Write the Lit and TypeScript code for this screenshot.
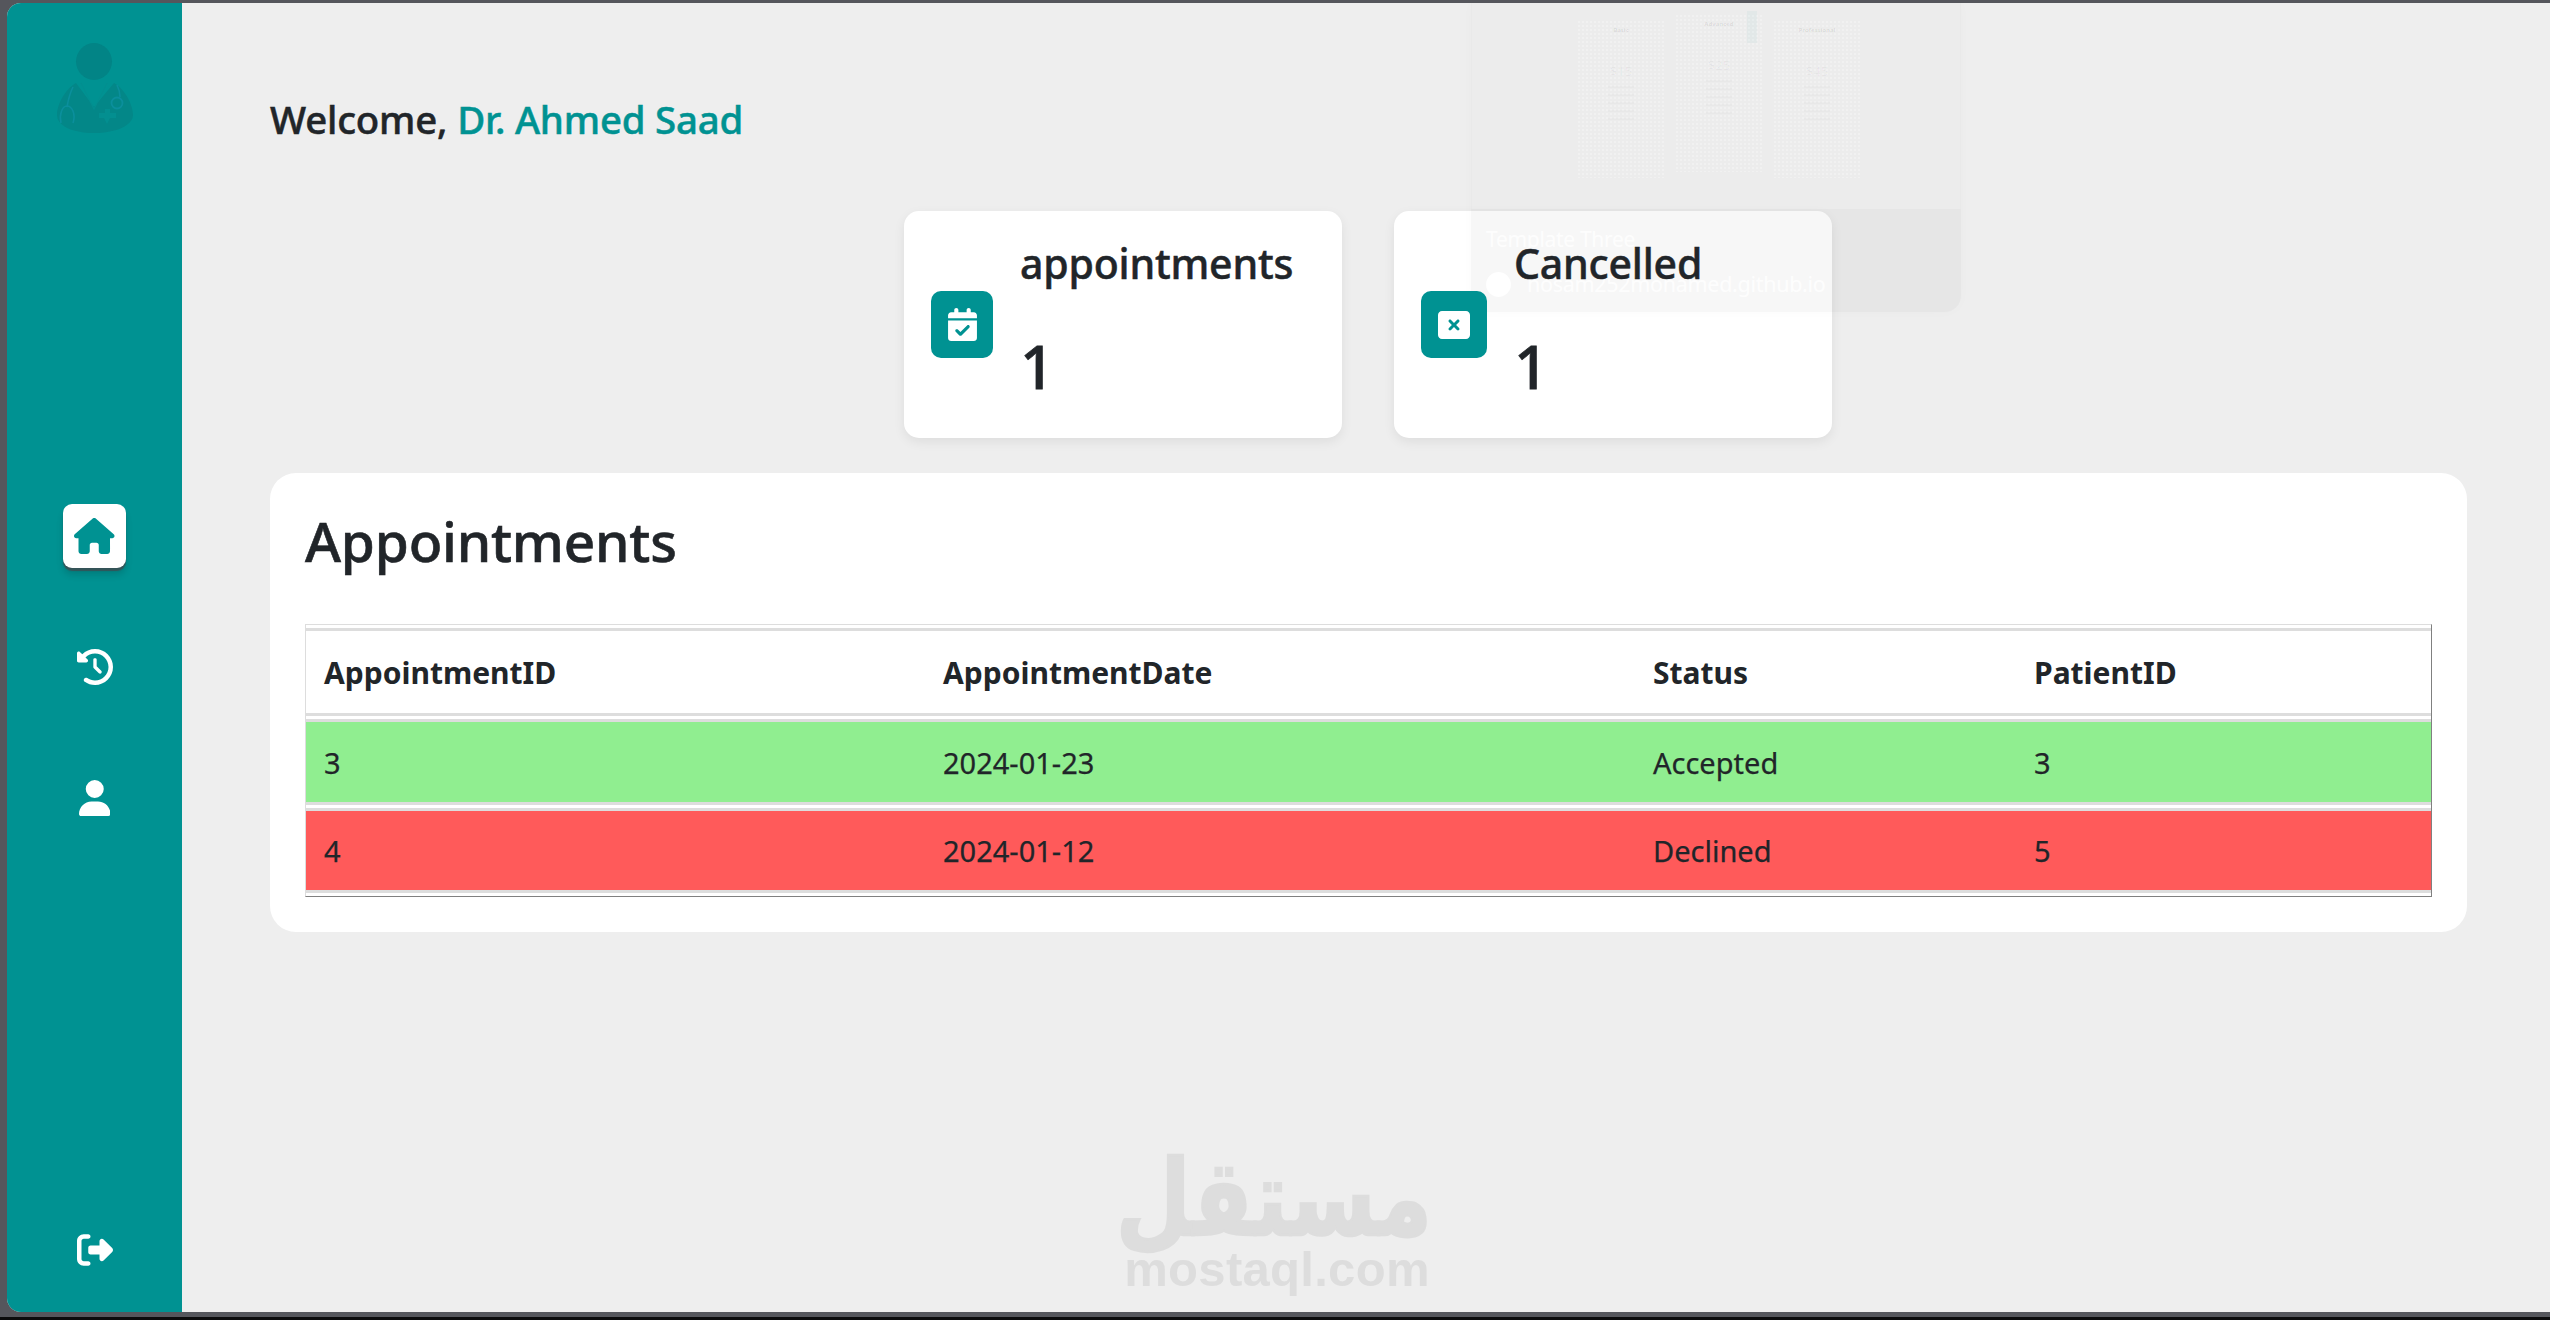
import { LitElement, html, css, svg } from "lit";
import { customElement } from "lit/decorators.js";

const ICONS = {
  house: ["0 0 576 512", "M575.8 255.5c0 18-15 32.1-32 32.1h-32l.7 160.2c0 2.7-.2 5.4-.5 8.1V472c0 22.1-17.9 40-40 40H456c-1.1 0-2.2 0-3.3-.1c-1.4 .1-2.8 .1-4.2 .1H416 392c-22.1 0-40-17.9-40-40V448 384c0-17.7-14.3-32-32-32H256c-17.7 0-32 14.3-32 32v64 24c0 22.1-17.9 40-40 40H160 128.1c-1.5 0-3-.1-4.5-.2c-1.2 .1-2.4 .2-3.6 .2H104c-22.1 0-40-17.9-40-40V360c0-.9 0-1.9 .1-2.8V287.6H32c-18 0-32-14-32-32.1c0-9 3-17 10-24L266.4 8c7-7 15-8 22-8s15 2 21 7L564.8 231.5c8 7 12 15 11 24z"],
  history: ["0 0 512 512", "M75 75L41 41C25.9 25.9 0 36.6 0 57.9V168c0 13.3 10.7 24 24 24H134.1c21.4 0 32.1-25.9 17-41l-30.8-30.8C155 85.5 203 64 256 64c106 0 192 86 192 192s-86 192-192 192c-40.8 0-78.6-12.7-109.7-34.4c-14.5-10.1-34.4-6.6-44.6 7.9s-6.6 34.4 7.9 44.6C151.2 495 201.7 512 256 512c141.4 0 256-114.6 256-256S397.4 0 256 0C185.3 0 121.3 28.7 75 75zm181 53c-13.3 0-24 10.7-24 24V256c0 6.4 2.5 12.5 7 17l72 72c9.4 9.4 24.6 9.4 33.9 0s9.4-24.6 0-33.9l-65-65V152c0-13.3-10.7-24-24-24z"],
  user: ["0 0 448 512", "M224 256A128 128 0 1 0 224 0a128 128 0 1 0 0 256zm-45.7 48C79.8 304 0 383.8 0 482.3C0 498.7 13.3 512 29.7 512H418.3c16.4 0 29.7-13.3 29.7-29.7C448 383.8 368.2 304 269.7 304H178.3z"],
  logout: ["0 0 512 512", "M377.9 105.9L500.7 228.7c7.2 7.2 11.3 17.1 11.3 27.3s-4.1 20.1-11.3 27.3L377.9 406.1c-6.4 6.4-15 9.9-24 9.9c-18.7 0-33.9-15.2-33.9-33.9V320H192c-17.7 0-32-14.3-32-32V224c0-17.7 14.3-32 32-32H320V129.9c0-18.7 15.2-33.9 33.9-33.9c9 0 17.6 3.6 24 9.9zM160 96H96c-17.7 0-32 14.3-32 32V384c0 17.7 14.3 32 32 32h64c17.7 0 32 14.3 32 32s-14.3 32-32 32H96c-53 0-96-43-96-96V128C0 75 43 32 96 32h64c17.7 0 32 14.3 32 32s-14.3 32-32 32z"],
  calendar: ["0 0 448 512", "M128 0c17.7 0 32 14.3 32 32V64H288V32c0-17.7 14.3-32 32-32s32 14.3 32 32V64h48c26.5 0 48 21.5 48 48v48H0V112C0 85.5 21.5 64 48 64H96V32c0-17.7 14.3-32 32-32zM0 192H448V464c0 26.5-21.5 48-48 48H48c-26.5 0-48-21.5-48-48V192zM329 305c9.4-9.4 9.4-24.6 0-33.9s-24.6-9.4-33.9 0l-103 103L153 335c-9.4-9.4-24.6-9.4-33.9 0s-9.4 24.6 0 33.9l56 56c9.4 9.4 24.6 9.4 33.9 0L329 305z"],
  xmark: ["0 32 512 448", "M64 32C28.7 32 0 60.7 0 96V416c0 35.3 28.7 64 64 64H448c35.3 0 64-28.7 64-64V96c0-35.3-28.7-64-64-64H64zM175 175c9.4-9.4 24.6-9.4 33.9 0l47 47 47-47c9.4-9.4 24.6-9.4 33.9 0s9.4 24.6 0 33.9l-47 47 47 47c9.4 9.4 9.4 24.6 0 33.9s-24.6 9.4-33.9 0l-47-47-47 47c-9.4 9.4-24.6 9.4-33.9 0s-9.4-24.6 0-33.9l47-47-47-47c-9.4-9.4-9.4-24.6 0-33.9z"],
} as const;

const icon = (name: keyof typeof ICONS, cls: string) => {
  const [vb, d] = ICONS[name];
  return html`<svg class=${cls} viewBox=${vb} fill="currentColor" aria-hidden="true">${svg`<path d=${d}></path>`}</svg>`;
};

const ROWS = [
  { id: "3", date: "2024-01-23", status: "Accepted", patient: "3", cls: "ok" },
  { id: "4", date: "2024-01-12", status: "Declined", patient: "5", cls: "no" },
];

const PLANS = [
  { name: "Basic", price: "$15", cls: "" },
  { name: "Advanced", price: "$25", cls: "up" },
  { name: "Professional", price: "$45", cls: "" },
];

@customElement("app-root")
export class AppRoot extends LitElement {
  static styles = css`
    :host {
      display: block;
      box-sizing: border-box;
      height: 1320px;
      padding: 3px 0 5px 7px;
      background: #55565c;
      border-bottom: 3px solid #0b0b0c;
      font-family: "Noto Sans", sans-serif;
      color: #212529;
      overflow: hidden;
    }
    .window {
      display: flex;
      height: 100%;
      background: #eeeeee;
      border-radius: 14px 0 0 14px;
      overflow: hidden;
    }
    .side {
      flex: 0 0 175px;
      display: flex;
      flex-direction: column;
      align-items: center;
      background: #009292;
      color: #fff;
      padding: 40px 0 44px;
      box-sizing: border-box;
    }
    .logo { width: 76px; height: 90px; display: block; }
    .nav {
      display: flex;
      flex-direction: column;
      align-items: center;
      gap: 67px;
      margin-top: 371px;
    }
    .item {
      width: 63px;
      height: 64px;
      display: flex;
      align-items: center;
      justify-content: center;
      border-radius: 9px;
    }
    .item.active {
      background: #fff;
      color: #009292;
      box-shadow: 0 3px 1px rgba(70, 70, 75, 0.75), 0 7px 7px rgba(0, 0, 0, 0.14);
    }
    .i-house { width: 40.5px; height: 36px; }
    .i-hist { width: 36px; height: 36px; }
    .i-user { width: 31.5px; height: 36px; }
    .i-out { width: 36px; height: 36px; margin-top: auto; display: block; }

    .main {
      position: relative;
      flex: 1;
      min-width: 0;
      padding: 91px 83px 0 88px;
      box-sizing: border-box;
    }
    .welcome {
      margin: 0;
      font-size: 38.4px;
      line-height: 50px;
      font-weight: 500;
      letter-spacing: -0.2px;
      -webkit-text-stroke: 0.5px currentColor;
    }
    .welcome span { color: #009292; }
    .cards {
      display: flex;
      justify-content: center;
      gap: 52px;
      margin: 67px 1px 0 0;
    }
    .card {
      width: 438px;
      height: 227px;
      box-sizing: border-box;
      padding: 0 27px;
      background: #fff;
      border-radius: 15px;
      box-shadow: 0 4px 12px rgba(0, 0, 0, 0.07);
      display: flex;
      align-items: center;
      gap: 27px;
    }
    .badge {
      position: relative;
      z-index: 2;
      flex: 0 0 62px;
      height: 67px;
      border-radius: 10px;
      background: #009292;
      color: #fff;
      display: flex;
      align-items: center;
      justify-content: center;
    }
    .badge.wide { flex-basis: 66px; }
    .i-cal { width: 29px; height: 33px; }
    .i-x { width: 32px; height: 28px; }
    .stat { position: relative; z-index: 2; align-self: flex-start; }
    .stat h3 {
      margin: 25px 0 0;
      font-size: 41px;
      line-height: 54px;
      font-weight: 500;
      letter-spacing: -0.2px;
      -webkit-text-stroke: 0.5px currentColor;
    }
    .stat p {
      margin: 40px 0 0;
      font-size: 60px;
      line-height: 72px;
      font-weight: 500;
      -webkit-text-stroke: 0.8px currentColor;
    }
    .panel {
      margin-top: 35px;
      height: 459px;
      box-sizing: border-box;
      padding: 31px 35px 0;
      background: #fff;
      border-radius: 26px;
    }
    .panel h2 {
      margin: 0;
      font-size: 55px;
      line-height: 74px;
      font-weight: 500;
      letter-spacing: -0.2px;
      -webkit-text-stroke: 0.6px currentColor;
    }
    table {
      margin-top: 46px;
      width: 100%;
      table-layout: fixed;
      border-collapse: separate;
      border-spacing: 0 3px;
      border: 1px solid #808080;
      border-top-color: #dddddd;
      border-left-color: #dddddd;
      font-size: 29px;
    }
    th, td {
      padding: 0 0 0 18px;
      text-align: left;
      border-top: 3px solid #dddddd;
      border-bottom: 3px solid #dddddd;
      height: 80px;
      box-sizing: content-box;
    }
    td { -webkit-text-stroke: 0.25px currentColor; }
    th { height: 82px; font-weight: 700; font-size: 30px; }
    th:nth-child(1) { width: 601px; }
    th:nth-child(2) { width: 692px; }
    th:nth-child(3) { width: 363px; }
    tr.ok td { background: #90ee90; }
    tr.no td { background: #ff5a5a; height: 79px; }

    .ghost {
      position: absolute;
      z-index: 1;
      left: 1289px;
      top: 0;
      width: 490px;
      height: 309px;
      display: flex;
      flex-direction: column;
      border-radius: 0 0 16px 16px;
      box-shadow: 0 0 12px rgba(0, 0, 0, 0.02);
      overflow: hidden;
      pointer-events: none;
    }
    .g-top {
      position: relative;
      flex: 0 0 206px;
      background: rgba(0, 0, 0, 0.008);
      border: solid rgba(0, 0, 0, 0.012);
      border-width: 0 1px;
      box-sizing: border-box;
    }
    .plan {
      position: absolute;
      top: 17px;
      width: 88px;
      height: 158px;
      background: radial-gradient(circle, rgba(255, 255, 255, 0.25) 0.8px, transparent 1.1px) 0 0 / 4px 4px;
      display: flex;
      flex-direction: column;
      align-items: center;
      gap: 6px;
      padding-top: 6px;
      box-sizing: border-box;
      font-size: 6px;
      font-weight: 700;
      color: rgba(0, 0, 0, 0.09);
    }
    .plan:nth-child(1) { left: 105px; }
    .plan:nth-child(2) { left: 203px; top: 11px; }
    .plan:nth-child(3) { left: 301px; }
    .plan b { font-size: 13px; margin-top: 22px; font-weight: 400; color: rgba(0, 0, 0, 0.035); }
    .plan i { display: block; width: 26px; height: 2px; background: rgba(0, 0, 0, 0.015); }
    .ribbon {
      position: absolute;
      left: 275px;
      top: 8px;
      width: 10px;
      height: 32px;
      background: rgba(0, 147, 147, 0.04);
    }
    .g-bottom {
      flex: 1;
      background: rgba(0, 0, 0, 0.032);
      padding: 15px 15px 0;
      color: rgba(255, 255, 255, 0.85);
    }
    .g-title { font-size: 21px; line-height: 30px; letter-spacing: -0.3px; }
    .g-link { display: flex; align-items: center; gap: 16px; margin-top: 17px; font-size: 21.5px; letter-spacing: -0.3px; line-height: 26px; }
    .g-link::before {
      content: "";
      width: 25px;
      height: 25px;
      border-radius: 50%;
      background: rgba(255, 255, 255, 0.9);
    }

    .mark {
      position: absolute;
      left: 945px;
      top: 1143px;
      width: 305px;
      height: 150px;
      color: #dddddd;
      text-align: center;
      pointer-events: none;
    }
    .mark .ar {
      display: block;
      font-family: "DejaVu Sans", sans-serif;
      font-weight: 700;
      font-size: 86.5px;
      line-height: 104px;
      white-space: nowrap;
      -webkit-text-stroke: 2px currentColor;
      transform: scaleY(1.22);
    }
    .mark .en {
      display: block;
      margin: -4px 0 0 -5px;
      font-family: "Liberation Sans", sans-serif;
      font-weight: 700;
      font-size: 49px;
      line-height: 46px;
      letter-spacing: 0.3px;
      white-space: nowrap;
    }
  `;

  private logo() {
    return html`<svg class="logo" viewBox="0 0 76 90" aria-hidden="true">
      <ellipse cx="37" cy="18.5" rx="18" ry="18.5" fill="#028486"></ellipse>
      <path d="M19 40C8 46 0 62 0 72c0 10 14 18 37 18s39-8 39-18c0-10-8-26-19-32L37 64z" fill="#038788"></path>
      <path d="M24 40 37 66 50 40" fill="none" stroke="#038f90" stroke-width="1.2"></path>
      <path d="M16 44c-3 6-5 14-6 20M4 80c-2-8 1-17 6-17s9 8 6 17" fill="none" stroke="#0b8f9c" stroke-width="1.6"></path>
      <path d="M60 42c2 4 3 8 3 12" fill="none" stroke="#0b8f9c" stroke-width="1.6"></path>
      <circle cx="60" cy="60" r="5.5" fill="none" stroke="#0b8f9c" stroke-width="1.8"></circle>
      <path d="M42 70h6v-4h5v4h6v5h-6l-3 6-3-6h-5z" fill="#038f90"></path>
    </svg>`;
  }

  render() {
    return html`
      <div class="window">
        <aside class="side">
          ${this.logo()}
          <nav class="nav">
            <div class="item active">${icon("house", "i-house")}</div>
            <div class="item">${icon("history", "i-hist")}</div>
            <div class="item">${icon("user", "i-user")}</div>
          </nav>
          ${icon("logout", "i-out")}
        </aside>
        <main class="main">
          <h1 class="welcome">Welcome, <span>Dr. Ahmed Saad</span></h1>

          <section class="cards">
            <div class="card">
              <div class="badge">${icon("calendar", "i-cal")}</div>
              <div class="stat"><h3>appointments</h3><p>1</p></div>
            </div>
            <div class="card">
              <div class="badge wide">${icon("xmark", "i-x")}</div>
              <div class="stat"><h3>Cancelled</h3><p>1</p></div>
            </div>
          </section>

          <section class="panel">
            <h2>Appointments</h2>
            <table>
              <thead>
                <tr><th>AppointmentID</th><th>AppointmentDate</th><th>Status</th><th>PatientID</th></tr>
              </thead>
              <tbody>
                ${ROWS.map(
                  (r) => html`<tr class=${r.cls}><td>${r.id}</td><td>${r.date}</td><td>${r.status}</td><td>${r.patient}</td></tr>`
                )}
              </tbody>
            </table>
          </section>

          <div class="ghost">
            <div class="g-top">
              ${PLANS.map(
                (p) => html`<div class="plan"><span>${p.name}</span><b>${p.price}</b><i></i><i></i><i></i><i></i><i></i></div>`
              )}
              <div class="ribbon"></div>
            </div>
            <div class="g-bottom">
              <div class="g-title">Template Three</div>
              <div class="g-link">hosam252mohamed.github.io</div>
            </div>
          </div>

          <div class="mark">
            <span class="ar" dir="rtl">مستقل</span>
            <span class="en">mostaql.com</span>
          </div>
        </main>
      </div>
    `;
  }
}
